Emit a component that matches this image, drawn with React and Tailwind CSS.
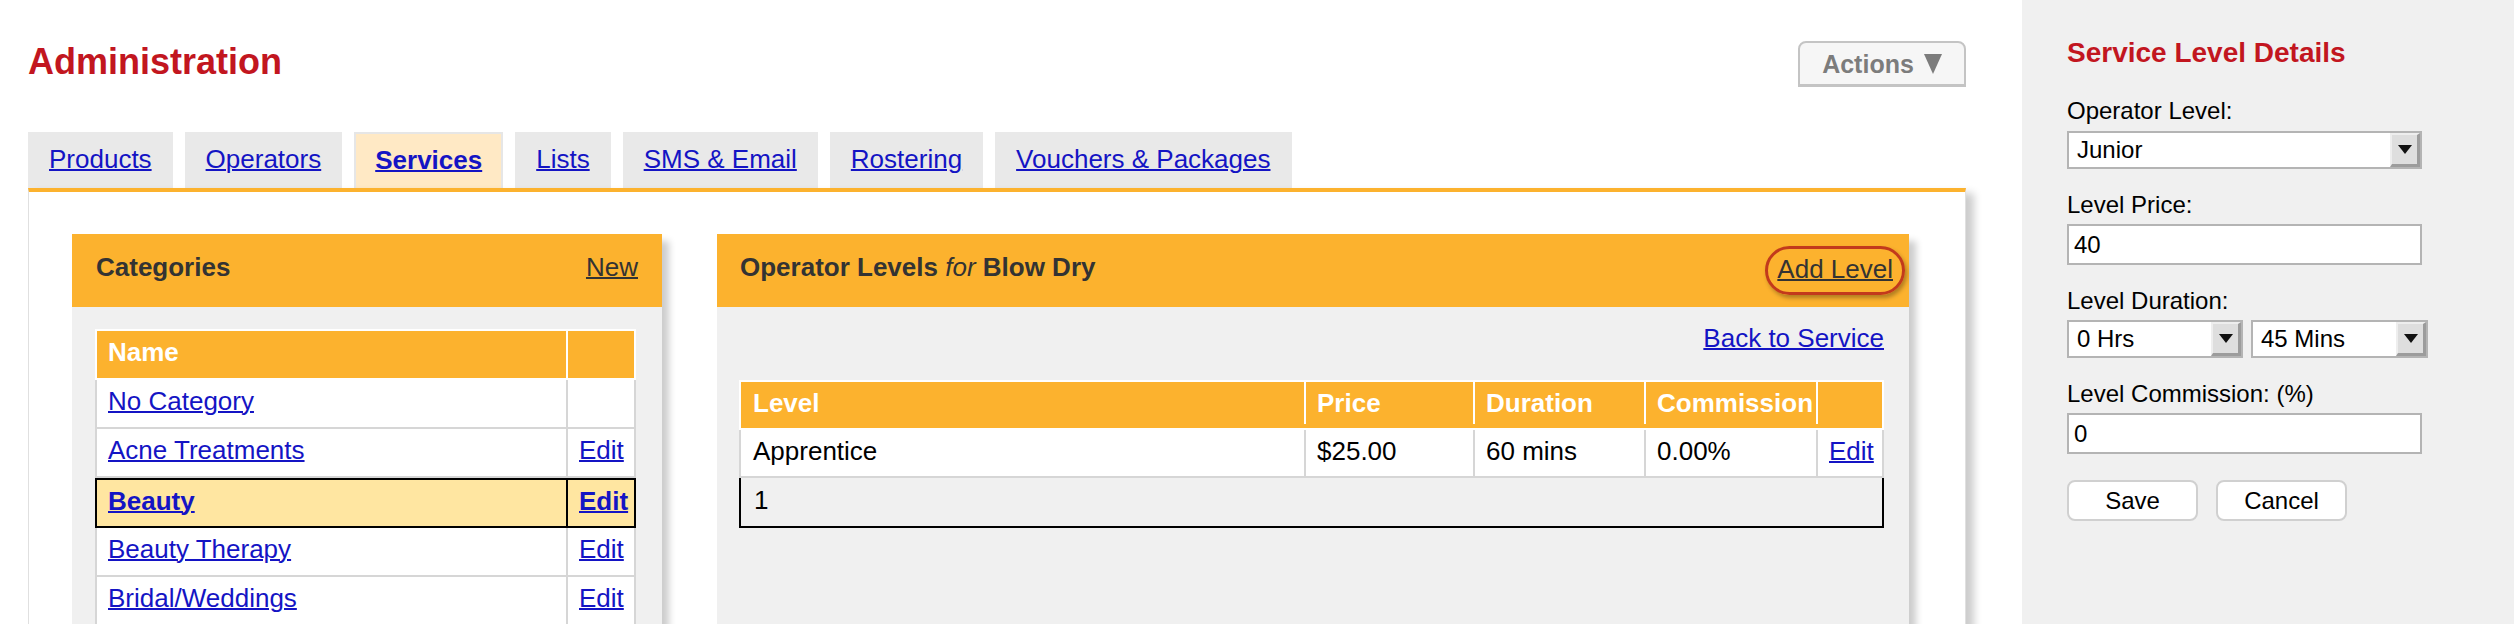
import React from 'react'

// Admin > Services > operator levels screen, retina-sized
const tabs = [
  { label: 'Products' },
  { label: 'Operators' },
  { label: 'Services', active: true },
  { label: 'Lists' },
  { label: 'SMS & Email' },
  { label: 'Rostering' },
  { label: 'Vouchers & Packages' },
]

const categories = [
  { name: 'No Category', edit: false },
  { name: 'Acne Treatments', edit: true },
  { name: 'Beauty', edit: true, selected: true },
  { name: 'Beauty Therapy', edit: true },
  { name: 'Bridal/Weddings', edit: true },
]

const Tab = ({ label, active }) => (
  <div
    className={
      active
        ? 'h-[56px] px-[19px] pb-[3px] bg-[#ffe9c5] border-2 border-b-0 border-[#e6e6e6] flex items-center'
        : 'h-[56px] px-[21px] pb-[3px] bg-[#e9e9e9] flex items-center'
    }
  >
    <a
      href="#"
      className={
        active
          ? 'text-[26px] leading-[30px] font-bold underline decoration-2 text-[#1414c4]'
          : 'text-[26px] leading-[30px] underline decoration-2 text-[#1414c4]'
      }
    >
      {label}
    </a>
  </div>
)

const Arrow = () => (
  <svg width="14" height="9" viewBox="0 0 14 9">
    <path d="M0 0 H14 L7 9 Z" fill="#111" />
  </svg>
)

// faux select box with bevelled arrow button
const Select = ({ value, width }) => (
  <div
    className="h-[38px] border-2 border-[#b4b4b4] bg-white flex items-stretch"
    style={{ width }}
  >
    <div className="flex-1 flex items-center pl-[8px] text-[24px] leading-[28px] text-black">{value}</div>
    <div className="w-[30px] bg-[#dedede] border-t-2 border-l-2 border-[#eeeeee] border-r-[3px] border-b-[3px] border-r-[#9c9c9c] border-b-[#9c9c9c] flex items-center justify-center">
      <Arrow />
    </div>
  </div>
)

const TextInput = ({ value }) => (
  <div className="w-[355px] h-[41px] border-2 border-[#b4b4b4] bg-white flex items-center pl-[5px] text-[24px] leading-[28px] text-black">
    {value}
  </div>
)

const Label = ({ children }) => (
  <div className="text-[24px] leading-[28px] text-black">{children}</div>
)

export default function App() {
  return (
    <div className="flex w-[2514px] h-[624px] overflow-hidden bg-white font-['Liberation_Sans',Arial,sans-serif]">
      {/* main column */}
      <div className="w-[2022px] shrink-0 pl-[28px] flex flex-col">
        <div className="w-[1938px] flex justify-between items-start pt-[41px]">
          <h1 className="mt-[3px] text-[36px] leading-[36px] font-bold text-[#c2161f]">Administration</h1>
          <button className="w-[168px] h-[46px] bg-[#f6f6f6] border-2 border-[#c4c4c4] border-b-[3px] rounded-t-[8px] flex items-center justify-center gap-[10px] text-[25px] leading-[28px] font-bold text-[#7c7c7c]">
            <span>Actions</span>
            <svg width="18" height="20" viewBox="0 0 18 20">
              <path d="M0 0 H18 L9 20 Z" fill="#7c7c7c" />
            </svg>
          </button>
        </div>

        <div className="mt-[45px] flex gap-[12px]">
          {tabs.map((t) => (
            <Tab key={t.label} {...t} />
          ))}
        </div>

        <div className="w-[1938px] flex-1 bg-white border-t-4 border-t-[#fcb22e] border-l border-r border-[#e0e0e0] shadow-[8px_5px_8px_rgba(0,0,0,0.2)] pt-[42px] pl-[43px] flex items-start gap-[55px]">
          {/* categories */}
          <div className="w-[590px] h-[420px] bg-[#f0f0f0] shadow-[7px_7px_7px_rgba(0,0,0,0.2)]">
            <div className="h-[73px] bg-[#fcb22e] px-[24px] pb-[7px] flex items-center justify-between">
              <span className="text-[26px] leading-[30px] font-bold text-[#333]">Categories</span>
              <a href="#" className="text-[26px] leading-[30px] underline decoration-2 text-[#333]">New</a>
            </div>
            <div className="pt-[22px] pl-[23px]">
              <div className="w-[541px]">
                <div className="h-[51px] border-2 border-white bg-[#fcb22e] flex">
                  <div className="w-[471px] border-r-2 border-white flex items-center pl-[11px] pb-[5px] text-[26px] leading-[30px] font-bold text-white">Name</div>
                  <div className="flex-1" />
                </div>
                {categories.map((c) => (
                  <div
                    key={c.name}
                    className={
                      c.selected
                        ? 'h-[50px] border-2 border-black bg-[#ffe6a1] flex'
                        : 'h-[49px] border-x-2 border-b-2 border-[#d6d6d6] bg-white flex'
                    }
                  >
                    <div
                      className={
                        c.selected
                          ? 'w-[471px] border-r-2 border-black flex items-center pl-[11px] pb-[5px]'
                          : 'w-[471px] border-r-2 border-[#d6d6d6] flex items-center pl-[11px] pb-[5px]'
                      }
                    >
                      <a
                        href="#"
                        className={
                          c.selected
                            ? 'text-[26px] leading-[30px] font-bold underline decoration-2 text-[#1414c4]'
                            : 'text-[26px] leading-[30px] underline decoration-2 text-[#1414c4]'
                        }
                      >
                        {c.name}
                      </a>
                    </div>
                    <div className="flex-1 flex items-center pl-[11px] pb-[5px]">
                      {c.edit && (
                        <a
                          href="#"
                          className={
                            c.selected
                              ? 'text-[26px] leading-[30px] font-bold underline decoration-2 text-[#1414c4]'
                              : 'text-[26px] leading-[30px] underline decoration-2 text-[#1414c4]'
                          }
                        >
                          Edit
                        </a>
                      )}
                    </div>
                  </div>
                ))}
              </div>
            </div>
          </div>

          {/* operator levels */}
          <div className="w-[1192px] h-[420px] bg-[#f0f0f0] shadow-[7px_7px_7px_rgba(0,0,0,0.2)]">
            <div className="h-[73px] bg-[#fcb22e] pl-[23px] pr-[4px] flex items-center justify-between">
              <span className="pb-[7px] text-[26px] leading-[30px] font-bold text-[#333]">
                Operator Levels <i className="font-normal">for</i> Blow Dry
              </span>
              <a
                href="#"
                className="h-[49px] px-[9px] pb-[3px] flex items-center rounded-full border-[3px] border-[#c23a1c] shadow-[2px_3px_4px_rgba(0,0,0,0.3)] text-[26px] leading-[30px] underline decoration-2 text-[#333]"
              >
                Add Level
              </a>
            </div>
            <div className="pl-[22px]">
              <div className="w-[1145px] mt-[16px] flex justify-end">
                <a href="#" className="text-[26px] leading-[30px] underline decoration-2 text-[#1414c4]">Back to Service</a>
              </div>
              <div className="w-[1145px] mt-[27px]">
                <div className="h-[50px] pb-[4px] border-2 border-white bg-[#fcb22e] flex text-[26px] leading-[30px] font-bold text-white">
                  <div className="w-[565px] border-r-2 border-white flex items-center pl-[12px]">Level</div>
                  <div className="w-[169px] border-r-2 border-white flex items-center pl-[11px]">Price</div>
                  <div className="w-[171px] border-r-2 border-white flex items-center pl-[11px]">Duration</div>
                  <div className="w-[172px] border-r-2 border-white flex items-center pl-[11px]">Commission</div>
                  <div className="flex-1" />
                </div>
                <div className="h-[48px] border-x-2 border-b-2 border-[#d6d6d6] bg-white flex text-[26px] leading-[30px] text-black">
                  <div className="w-[565px] border-r-2 border-[#d6d6d6] flex items-center pl-[12px] pb-[4px]">Apprentice</div>
                  <div className="w-[169px] border-r-2 border-[#d6d6d6] flex items-center pl-[11px] pb-[4px]">$25.00</div>
                  <div className="w-[171px] border-r-2 border-[#d6d6d6] flex items-center pl-[11px] pb-[4px]">60 mins</div>
                  <div className="w-[172px] border-r-2 border-[#d6d6d6] flex items-center pl-[11px] pb-[4px]">0.00%</div>
                  <div className="flex-1 flex items-center pl-[11px] pb-[4px]">
                    <a href="#" className="underline decoration-2 text-[#1414c4]">Edit</a>
                  </div>
                </div>
                <div className="h-[50px] border-x-2 border-b-2 border-black flex items-center pl-[13px] pb-[4px] text-[26px] leading-[30px] text-black">
                  1
                </div>
              </div>
            </div>
          </div>
        </div>
      </div>

      {/* right sidebar */}
      <div className="flex-1 bg-[#f0f0f0] pl-[45px] pt-[37px]">
        <h2 className="text-[28px] leading-[32px] font-bold text-[#c2161f]">Service Level Details</h2>
        <div className="mt-[28px]">
          <Label>Operator Level:</Label>
          <div className="mt-[6px]">
            <Select value="Junior" width={355} />
          </div>
        </div>
        <div className="mt-[22px]">
          <Label>Level Price:</Label>
          <div className="mt-[5px]">
            <TextInput value="40" />
          </div>
        </div>
        <div className="mt-[22px]">
          <Label>Level Duration:</Label>
          <div className="mt-[5px] flex gap-[8px]">
            <Select value="0 Hrs" width={176} />
            <Select value="45 Mins" width={177} />
          </div>
        </div>
        <div className="mt-[22px]">
          <Label>Level Commission: (%)</Label>
          <div className="mt-[5px]">
            <TextInput value="0" />
          </div>
        </div>
        <div className="mt-[26px] flex gap-[18px]">
          <button className="w-[131px] h-[41px] bg-white border-2 border-[#d0d0d0] rounded-[8px] text-[24px] leading-[28px] text-black">Save</button>
          <button className="w-[131px] h-[41px] bg-white border-2 border-[#d0d0d0] rounded-[8px] text-[24px] leading-[28px] text-black">Cancel</button>
        </div>
      </div>
    </div>
  )
}
